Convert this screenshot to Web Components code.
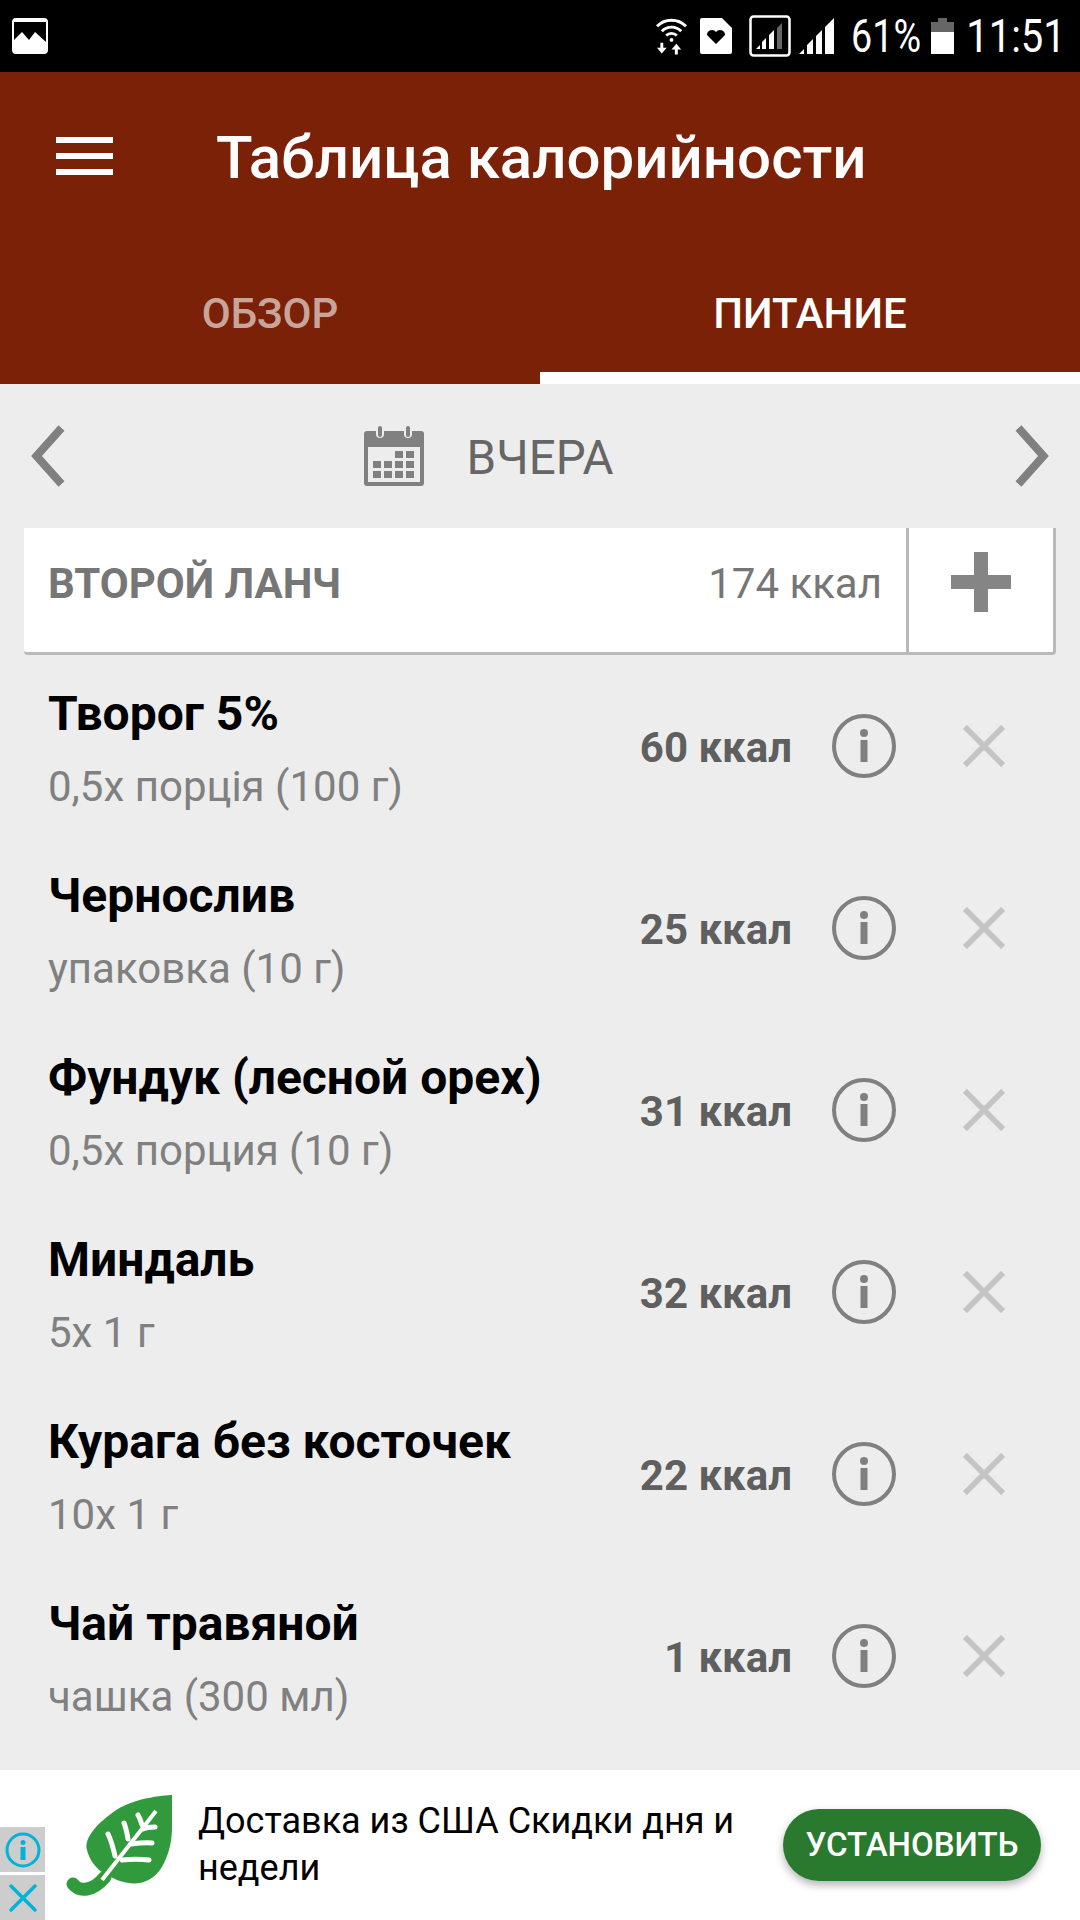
<!DOCTYPE html>
<html>
<head>
<meta charset="utf-8">
<style>
    html, body { margin: 0; padding: 0; background: #ededed; }
    body { width: 1080px; height: 1920px; overflow: hidden; font-family: Roboto, sans-serif; display: flex; flex-direction: column; }
</style>
</head>
<body>
<status-bar></status-bar>
<app-header title="Таблица калорийности"></app-header>
<date-nav label="ВЧЕРА"></date-nav>
<meal-card name="ВТОРОЙ ЛАНЧ" kcal="174 ккал"></meal-card>
<food-list>
    <food-row name="Творог 5%" portion="0,5х порція (100 г)" kcal="60 ккал"></food-row>
    <food-row name="Чернослив" portion="упаковка (10 г)" kcal="25 ккал"></food-row>
    <food-row name="Фундук (лесной орех)" portion="0,5х порция (10 г)" kcal="31 ккал"></food-row>
    <food-row name="Миндаль" portion="5х 1 г" kcal="32 ккал"></food-row>
    <food-row name="Курага без косточек" portion="10х 1 г" kcal="22 ккал"></food-row>
    <food-row name="Чай травяной" portion="чашка (300 мл)" kcal="1 ккал"></food-row>
</food-list>
<ad-banner></ad-banner>

<script>
class StatusBar extends HTMLElement {
    constructor() {
        super();
        this.attachShadow({ mode: "open" }).innerHTML = `
        <style>
            :host { display: flex; align-items: center; height: 72px; background: #000; color: #fff; padding: 0 16px 0 12px; box-sizing: border-box; flex: none; }
            svg { display: block; flex: none; }
            .right { margin-left: auto; display: flex; align-items: center; height: 72px; }
            .txt { display: flex; justify-content: center; white-space: nowrap; font-size: 46px; line-height: 72px; font-family: Roboto, sans-serif; transform: scaleX(.82); }
        </style>
        <svg width="36" height="36" viewBox="0 0 36 36"><path fill="#fff" fill-rule="evenodd" d="M4 0h28a4 4 0 0 1 4 4v28a4 4 0 0 1-4 4H4a4 4 0 0 1-4-4V4a4 4 0 0 1 4-4zM2 4v18l8-8 7 8 6-8 11 10V4z"/></svg>
        <div class="right">
            <svg width="31" height="38" viewBox="0 0 32 38" fill="none" stroke="#fff" stroke-width="3"><path d="M1 9a21 21 0 0 1 30 0M6 14a14 14 0 0 1 20 0M10.500 18.500a8 8 0 0 1 11 0"/><circle cx="16" cy="23" r="2" fill="#fff" stroke="none"/><path fill="#fff" stroke="none" d="M6 37l-5-6h3.500v-5h3v5H11zM21 27l5 6h-3.500v5h-3v-5H16z"/></svg>
            <svg style="margin-left:13px" width="32" height="36" viewBox="0 0 32 36"><path fill="#fff" fill-rule="evenodd" d="M2 0h20l10 10v24a2 2 0 0 1-2 2H2a2 2 0 0 1-2-2V2a2 2 0 0 1 2-2zM16 26l9-9a5 5 0 0 0-9-3 5 5 0 0 0-9 3z"/></svg>
            <svg style="margin-left:17px" width="42" height="42" viewBox="0 0 42 42"><rect x="1.500" y="1.500" width="39" height="39" rx="3" fill="none" stroke="#fff" stroke-width="2.500"/><path fill="#fff" d="M7 34l4-4v4zM13 34v-7l4-4v11zM20 34V20l5-5v19z"/><path fill="#666" d="M28 34V13l5-5v26z"/></svg>
            <svg style="margin-left:8px" width="36" height="36" viewBox="0 0 36 36"><path fill="#fff" d="M0 36l5-5v5zM8 36V27l6-6v15zM17 36V18l6-6v24zM26 36V9l9-9v36z"/></svg>
            <span class="txt" style="margin-left:16px;width:70px">61%</span>
            <svg style="margin-left:10px" width="23" height="36" viewBox="0 0 23 36"><path fill="#666" d="M7 0h9v4h7v14H0V4h7z"/><rect y="14" width="23" height="22" fill="#fff"/></svg>
            <span class="txt" style="margin-left:14px;width:96px;transform:scaleX(.87)">11:51</span>
        </div>`;
    }
}

class AppHeader extends HTMLElement {
    constructor() {
        super();
        this.attachShadow({ mode: "open" }).innerHTML = `
        <style>
            :host { display: block; background: #7a2108; color: #fff; height: 312px; flex: none; }
            .top { display: flex; align-items: center; height: 176px; padding: 0 0 6px 56px; box-sizing: border-box; }
            .burger { display: flex; flex-direction: column; gap: 10px; width: 57px; margin-right: 103px; margin-top: -2px; }
            .burger i { display: block; height: 6px; background: #fff; }
            h1 { margin: 0; font: 500 60px Roboto, sans-serif; }
            .tabs { display: flex; height: 136px; }
            .tab { flex: 1; text-align: center; font: 500 42px/132px Roboto, sans-serif; color: rgba(255,255,255,.62); box-sizing: border-box; padding-bottom: 6px; }
            .tab.on { color: #fff; border-bottom: 12px solid #fff; }
        </style>
        <div class="top">
            <div class="burger"><i></i><i></i><i></i></div>
            <h1>${this.getAttribute("title")}</h1>
        </div>
        <div class="tabs">
            <div class="tab">ОБЗОР</div>
            <div class="tab on">ПИТАНИЕ</div>
        </div>`;
    }
}

class DateNav extends HTMLElement {
    constructor() {
        super();
        this.attachShadow({ mode: "open" }).innerHTML = `
        <style>
            :host { display: grid; grid-template-columns: 1fr auto 1fr; align-items: center; height: 144px; padding: 0 29px; box-sizing: border-box; flex: none; color: #666; }
            .side { display: flex; align-items: center; justify-content: space-between; }
            .side.end { justify-content: flex-end; }
            .cal { margin-right: 43px; }
            .label { font: 400 47.500px Roboto, sans-serif; padding-top: 4px; }
            svg { display: block; }
        </style>
        <div class="side">
            <svg width="36" height="64" viewBox="0 0 36 64"><path fill="none" stroke="#808080" stroke-width="8" d="M32.500 4L7.500 32l25 28"/></svg>
            <svg class="cal" width="60" height="60" viewBox="0 0 60 60"><path fill="#808080" fill-rule="evenodd" d="M3 5h9v3a4 4 0 0 0 8 0V5h20v3a4 4 0 0 0 8 0V5h9a3 3 0 0 1 3 3v49a3 3 0 0 1-3 3H3a3 3 0 0 1-3-3V8a3 3 0 0 1 3-3zM4 21v35h52V21z"/><rect x="14" y="0" width="4" height="11" rx="2" fill="#808080"/><rect x="42" y="0" width="4" height="11" rx="2" fill="#808080"/><path fill="#808080" d="M31 25h8v7h-8zM42 25h8v7h-8zM9 35h8v7H9zM20 35h8v7h-8zM31 35h8v7h-8zM42 35h8v7h-8zM9 45h8v7H9zM20 45h8v7h-8zM31 45h8v7h-8zM42 45h8v7h-8z"/></svg>
        </div>
        <span class="label">${this.getAttribute("label")}</span>
        <div class="side end">
            <svg width="36" height="64" viewBox="0 0 36 64"><path fill="none" stroke="#808080" stroke-width="8" d="M3.500 4l25 28-25 28"/></svg>
        </div>`;
    }
}

class MealCard extends HTMLElement {
    constructor() {
        super();
        this.attachShadow({ mode: "open" }).innerHTML = `
        <style>
            :host { display: flex; height: 127px; margin: 0 24px 0 24px; background: #fff; border-bottom: 3px solid #b9b9b9; border-right: 3px solid #b9b9b9; border-radius: 0 0 4px 4px; box-sizing: border-box; flex: none; align-items: stretch; color: #767676; }
            .name { font: 700 42px/112px Roboto, sans-serif; padding-left: 24px; flex: 1; }
            .kcal { font: 400 42px/112px Roboto, sans-serif; padding-right: 24px; }
            .add { width: 147px; border-left: 3px solid #b9b9b9; display: flex; align-items: center; justify-content: center; box-sizing: border-box; }
            svg { display: block; margin-top: -17px; }
        </style>
        <div class="name">${this.getAttribute("name")}</div>
        <div class="kcal">${this.getAttribute("kcal")}</div>
        <div class="add"><svg width="60" height="60" viewBox="0 0 60 60"><path fill="#858585" d="M23 0h14v23h23v14H37v23H23V37H0V23h23z"/></svg></div>`;
    }
}

class FoodList extends HTMLElement {
    constructor() {
        super();
        this.attachShadow({ mode: "open" }).innerHTML = `
        <style>
            :host { display: block; flex: 1; padding-top: 1px; }
        </style>
        <slot></slot>`;
    }
}

class FoodRow extends HTMLElement {
    constructor() {
        super();
        this.attachShadow({ mode: "open" }).innerHTML = `
        <style>
            :host { display: flex; align-items: center; height: 182px; padding: 0 0 0 48px; box-sizing: border-box; }
            .txt { flex: 1; min-width: 0; padding-top: 4px; }
            .name { font: 700 48px/48px Roboto, sans-serif; color: #000; }
            .portion { font: 400 42px/44px Roboto, sans-serif; color: #808080; margin-top: 27px; }
            .kcal { font: 700 42px Roboto, sans-serif; color: #5f5f5f; width: 180px; text-align: right; margin-right: 40px; }
            svg { display: block; flex: none; margin-top: -2px; }
            .x { margin-left: 67px; margin-right: 75px; }
        </style>
        <div class="txt">
            <div class="name">${this.getAttribute("name")}</div>
            <div class="portion">${this.getAttribute("portion")}</div>
        </div>
        <div class="kcal">${this.getAttribute("kcal")}</div>
        <svg width="64" height="64" viewBox="0 0 64 64"><circle cx="32" cy="32" r="30" fill="none" stroke="#808080" stroke-width="4"/><circle cx="32" cy="19" r="4" fill="#808080"/><rect x="28.500" y="26" width="7" height="22" fill="#808080"/></svg>
        <svg class="x" width="42" height="42" viewBox="0 0 44 44"><path stroke="#c4c4c4" stroke-width="6" d="M2 2l40 40M42 2L2 42"/></svg>`;
    }
}

class AdBanner extends HTMLElement {
    constructor() {
        super();
        this.attachShadow({ mode: "open" }).innerHTML = `
        <style>
            :host { display: flex; align-items: center; height: 150px; background: #fff; position: relative; flex: none; }
            .choices { position: absolute; left: 0; bottom: 0; display: flex; flex-direction: column; gap: 3px; }
            .choices div { width: 45px; height: 45px; background: #cdcdcd; display: flex; align-items: center; justify-content: center; }
            .logo { margin-left: 66px; display: block; flex: none; }
            .text { font: 400 36px/47px Roboto, sans-serif; color: #000; width: 560px; margin-left: 25px; }
            .btn { margin-left: auto; margin-right: 39px; width: 258px; height: 72px; border-radius: 36px; background: #29792f; color: #fff; font: 500 33px/72px Roboto, sans-serif; text-align: center; box-shadow: 0 4px 8px rgba(0,0,0,.3); }
        </style>
        <div class="choices">
            <div><svg width="36" height="36" viewBox="0 0 36 36"><circle cx="18" cy="18" r="16" fill="none" stroke="#00b4d8" stroke-width="3"/><circle cx="18" cy="10.500" r="2.500" fill="#00b4d8"/><rect x="15.500" y="15" width="5" height="13" fill="#00b4d8"/></svg></div>
            <div><svg width="30" height="30" viewBox="0 0 30 30"><path stroke="#00b4d8" stroke-width="3.500" stroke-linecap="round" d="M3 3l24 24M27 3L3 27"/></svg></div>
        </div>
        <svg class="logo" width="107" height="101" viewBox="0 0 107 101">
            <path fill="#319a3c" d="M106 0C106 0 68 1 46 18 28 31 18 45 21 55c2 9 8 17 16 23l14 7c8 3 16 4 23 3 10-2 19-9 24-20 6-12 8-24 8-36z"/>
            <path fill="none" stroke="#319a3c" stroke-width="13" stroke-linecap="round" d="M7 89c4 5 8 6 14 5 7-1 12-5 18-12"/>
            <path fill="none" stroke="#fff" stroke-width="4" d="M36 85L90 16"/>
            <path fill="none" stroke="#fff" stroke-width="5" stroke-linecap="round" d="M56 65c9-1 19-1 27 0M65 49c7-1 15-2 21-1M77 34c4-2 8-2 12-2M49 61c-2-9-4-16-7-22M62 44c-1-6-2-11-4-16M76 30c-1-4-2-7-4-10"/>
        </svg>
        <div class="text">Доставка из США Скидки дня и недели</div>
        <div class="btn">УСТАНОВИТЬ</div>`;
    }
}

customElements.define("status-bar", StatusBar);
customElements.define("app-header", AppHeader);
customElements.define("date-nav", DateNav);
customElements.define("meal-card", MealCard);
customElements.define("food-list", FoodList);
customElements.define("food-row", FoodRow);
customElements.define("ad-banner", AdBanner);
</script>
</body>
</html>
